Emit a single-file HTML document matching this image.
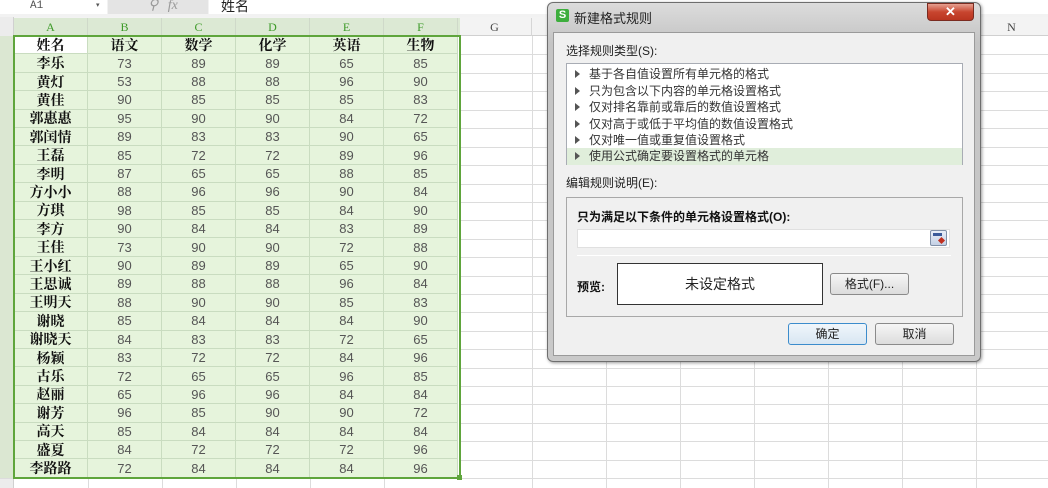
<!DOCTYPE html>
<html><head><meta charset="utf-8"><style>
*{margin:0;padding:0;box-sizing:border-box}
body{width:1048px;height:488px;overflow:hidden;background:#fff;position:relative;font-family:"Liberation Sans","Noto Sans CJK SC",sans-serif}
.a{position:absolute}
.grid{position:absolute;left:14px;top:36px;display:grid;grid-template-columns:repeat(6,74px);grid-template-rows:repeat(24,18.42px);background:#e6f4dc}
.grid div{border-right:1px solid #c9dcc0;border-bottom:1px solid #c9dcc0;display:flex;align-items:center;justify-content:center;font-size:13px;line-height:1;color:#555;font-family:"Liberation Sans",sans-serif;overflow:hidden}
.grid div.n{font-weight:bold;color:#111;font-size:14px;font-family:"Liberation Serif","Noto Serif CJK SC",serif;padding-top:4px}
.grid div.w{background:#fff}
.vl{position:absolute;top:36px;width:1px;height:452px;background:#dcdcdc}
.hl{position:absolute;left:460px;height:1px;width:588px;background:#dcdcdc}
.ch{position:absolute;top:18px;height:18px;font-size:12px;line-height:18px;text-align:center;font-family:"Liberation Serif",serif;border-right:1px solid #cfd9c9}
.li{position:absolute;left:0;width:395px;height:16.5px;font-size:12px;line-height:16px;color:#333;padding-left:22px}
.li:before{content:"";position:absolute;left:8px;top:4px;border-left:5px solid #555;border-top:4px solid transparent;border-bottom:4px solid transparent}
.btn{position:absolute;height:22px;border:1px solid #8a8a8a;border-radius:3px;background:linear-gradient(#f6f6f6,#dcdcdc);font-size:12px;text-align:center;line-height:20px;color:#222}
</style></head><body>
<div class="a" style="left:0;top:0;width:1048px;height:17px;background:#f2f2f2"></div>
<div class="a" style="left:0;top:0;width:107px;height:14px;background:#fff;font-size:11px;line-height:12px;padding-left:30px;color:#555;font-family:'Liberation Mono',monospace">A1<span style="position:absolute;left:96px;font-size:7px">▾</span></div>
<div class="a" style="left:108px;top:0;width:100px;height:14px;background:#e4e4e4;color:#999;font-size:14px;line-height:12px;padding-left:40px;font-style:italic;font-family:'Liberation Serif',serif">&#9906; <span style="margin-left:6px">fx</span></div>
<div class="a" style="left:209px;top:0;width:839px;height:14px;background:#fff;font-size:14px;line-height:12px;padding-left:12px;color:#222">姓名</div>
<div class="a" style="left:0;top:17px;width:1048px;height:19px;background:#f3f3f3;border-bottom:1px solid #d0d0d0"></div>
<div class="a" style="left:0;top:17px;width:14px;height:471px;background:#ececec;border-right:1px solid #d0d0d0"></div>
<div class="a" style="left:14px;top:18px;width:446px;height:18px;background:#dce9d4"></div>
<div class="a" style="left:0;top:36px;width:14px;height:442px;background:#dbe7d2"></div>
<div class="ch" style="left:14px;width:74px;color:#3d9a28">A</div>
<div class="ch" style="left:88px;width:74px;color:#3d9a28">B</div>
<div class="ch" style="left:162px;width:74px;color:#3d9a28">C</div>
<div class="ch" style="left:236px;width:74px;color:#3d9a28">D</div>
<div class="ch" style="left:310px;width:74px;color:#3d9a28">E</div>
<div class="ch" style="left:384px;width:74px;color:#3d9a28">F</div>
<div class="ch" style="left:458px;width:74px;color:#444;border-color:#d6d6d6">G</div>
<div class="ch" style="left:975px;width:74px;color:#444;border-color:#d6d6d6">N</div>
<div class="vl" style="left:532px"></div><div class="vl" style="left:606px"></div><div class="vl" style="left:680px"></div><div class="vl" style="left:754px"></div><div class="vl" style="left:828px"></div><div class="vl" style="left:902px"></div><div class="vl" style="left:976px"></div>
<div class="hl" style="top:54px"></div><div class="hl" style="top:73px"></div><div class="hl" style="top:91px"></div><div class="hl" style="top:110px"></div><div class="hl" style="top:128px"></div><div class="hl" style="top:147px"></div><div class="hl" style="top:165px"></div><div class="hl" style="top:184px"></div><div class="hl" style="top:202px"></div><div class="hl" style="top:220px"></div><div class="hl" style="top:239px"></div><div class="hl" style="top:257px"></div><div class="hl" style="top:276px"></div><div class="hl" style="top:294px"></div><div class="hl" style="top:312px"></div><div class="hl" style="top:331px"></div><div class="hl" style="top:349px"></div><div class="hl" style="top:368px"></div><div class="hl" style="top:386px"></div><div class="hl" style="top:404px"></div><div class="hl" style="top:423px"></div><div class="hl" style="top:441px"></div><div class="hl" style="top:460px"></div><div class="hl" style="top:478px"></div>
<div class="a" style="left:0;top:478px;width:460px;height:1px;background:#dcdcdc"></div>
<div class="vl" style="left:88px;top:478px;height:10px"></div><div class="vl" style="left:162px;top:478px;height:10px"></div><div class="vl" style="left:236px;top:478px;height:10px"></div><div class="vl" style="left:310px;top:478px;height:10px"></div><div class="vl" style="left:384px;top:478px;height:10px"></div>
<div class="grid">
<div class="n w">姓名</div><div class="n">语文</div><div class="n">数学</div><div class="n">化学</div><div class="n">英语</div><div class="n">生物</div>
<div class="n">李乐</div><div>73</div><div>89</div><div>89</div><div>65</div><div>85</div>
<div class="n">黄灯</div><div>53</div><div>88</div><div>88</div><div>96</div><div>90</div>
<div class="n">黄佳</div><div>90</div><div>85</div><div>85</div><div>85</div><div>83</div>
<div class="n">郭惠惠</div><div>95</div><div>90</div><div>90</div><div>84</div><div>72</div>
<div class="n">郭闰情</div><div>89</div><div>83</div><div>83</div><div>90</div><div>65</div>
<div class="n">王磊</div><div>85</div><div>72</div><div>72</div><div>89</div><div>96</div>
<div class="n">李明</div><div>87</div><div>65</div><div>65</div><div>88</div><div>85</div>
<div class="n">方小小</div><div>88</div><div>96</div><div>96</div><div>90</div><div>84</div>
<div class="n">方琪</div><div>98</div><div>85</div><div>85</div><div>84</div><div>90</div>
<div class="n">李方</div><div>90</div><div>84</div><div>84</div><div>83</div><div>89</div>
<div class="n">王佳</div><div>73</div><div>90</div><div>90</div><div>72</div><div>88</div>
<div class="n">王小红</div><div>90</div><div>89</div><div>89</div><div>65</div><div>90</div>
<div class="n">王思诚</div><div>89</div><div>88</div><div>88</div><div>96</div><div>84</div>
<div class="n">王明天</div><div>88</div><div>90</div><div>90</div><div>85</div><div>83</div>
<div class="n">谢晓</div><div>85</div><div>84</div><div>84</div><div>84</div><div>90</div>
<div class="n">谢晓天</div><div>84</div><div>83</div><div>83</div><div>72</div><div>65</div>
<div class="n">杨颖</div><div>83</div><div>72</div><div>72</div><div>84</div><div>96</div>
<div class="n">古乐</div><div>72</div><div>65</div><div>65</div><div>96</div><div>85</div>
<div class="n">赵丽</div><div>65</div><div>96</div><div>96</div><div>84</div><div>84</div>
<div class="n">谢芳</div><div>96</div><div>85</div><div>90</div><div>90</div><div>72</div>
<div class="n">高天</div><div>85</div><div>84</div><div>84</div><div>84</div><div>84</div>
<div class="n">盛夏</div><div>84</div><div>72</div><div>72</div><div>72</div><div>96</div>
<div class="n">李路路</div><div>72</div><div>84</div><div>84</div><div>84</div><div>96</div>
</div>
<div class="a" style="left:13px;top:35px;width:448px;height:444px;border:2px solid #5fa53c"></div>
<div class="a" style="left:457px;top:475px;width:5px;height:5px;background:#5fa53c"></div>
<div class="a" style="left:547px;top:2px;width:434px;height:360px;border:1px solid #6e6e6e;border-radius:6px;background:linear-gradient(#dcdcdc,#c4c4c4 40px,#c9c9c9);box-shadow:1px 1px 3px rgba(0,0,0,.4)"></div>
<div class="a" style="left:556px;top:9px;width:13px;height:13px;background:#3dae3d;border-radius:2px;color:#fff;font-size:11px;font-weight:bold;line-height:13px;text-align:center">S</div>
<div class="a" style="left:574px;top:8px;font-size:13px;color:#222">新建格式规则</div>
<div class="a" style="left:927px;top:3px;width:47px;height:18px;border:1px solid #7a2b20;border-radius:0 0 4px 4px;background:linear-gradient(#e6a090,#c8452f 50%,#b93520);color:#fff;font-size:13px;font-weight:bold;text-align:center;line-height:16px">✕</div>
<div class="a" style="left:553px;top:32px;width:422px;height:324px;background:#f0f0f0;border:1px solid #9a9a9a"></div>
<div class="a" style="left:566px;top:42px;font-size:12px;color:#222">选择规则类型(S):</div>
<div class="a" style="left:566px;top:63px;width:397px;height:102px;background:#fff;border:1px solid #a8acb4">
<div class="li" style="top:2px">基于各自值设置所有单元格的格式</div>
<div class="li" style="top:18.5px">只为包含以下内容的单元格设置格式</div>
<div class="li" style="top:35px">仅对排名靠前或靠后的数值设置格式</div>
<div class="li" style="top:51.5px">仅对高于或低于平均值的数值设置格式</div>
<div class="li" style="top:68px">仅对唯一值或重复值设置格式</div>
<div class="li" style="top:84px;background:#e0eedb">使用公式确定要设置格式的单元格</div>
</div>
<div class="a" style="left:566px;top:174px;font-size:12px;color:#222">编辑规则说明(E):</div>
<div class="a" style="left:566px;top:197px;width:397px;height:120px;border:1px solid #a8a8a8"></div>
<div class="a" style="left:577px;top:208px;font-size:12px;font-weight:bold;color:#111">只为满足以下条件的单元格设置格式(O):</div>
<div class="a" style="left:577px;top:229px;width:373px;height:19px;background:#fff;border:1px solid #e0e0e0"></div>
<div class="a" style="left:930px;top:230px;width:17px;height:16px;border:1px solid #8090a8;border-radius:2px;background:linear-gradient(#e8eef8,#c4d0e4)"><div style="position:absolute;left:2px;top:2px;width:9px;height:3px;background:#3a5a9a"></div><div style="position:absolute;left:8px;top:7px;width:5px;height:5px;background:#c03020;transform:rotate(45deg)"></div></div>
<div class="a" style="left:577px;top:255px;width:374px;height:1px;background:#b8b8b8;border-bottom:1px solid #fff"></div>
<div class="a" style="left:577px;top:278px;font-size:12px;font-weight:bold;color:#111">预览:</div>
<div class="a" style="left:617px;top:263px;width:206px;height:42px;background:#fff;border:1px solid #333;font-size:14px;text-align:center;line-height:40px;color:#222">未设定格式</div>
<div class="btn" style="left:830px;top:273px;width:79px">格式(F)...</div>
<div class="btn" style="left:788px;top:323px;width:79px;border-color:#3c8ccc;background:linear-gradient(#f0f6fb,#d8e6f2)">确定</div>
<div class="btn" style="left:875px;top:323px;width:79px">取消</div>
</body></html>
